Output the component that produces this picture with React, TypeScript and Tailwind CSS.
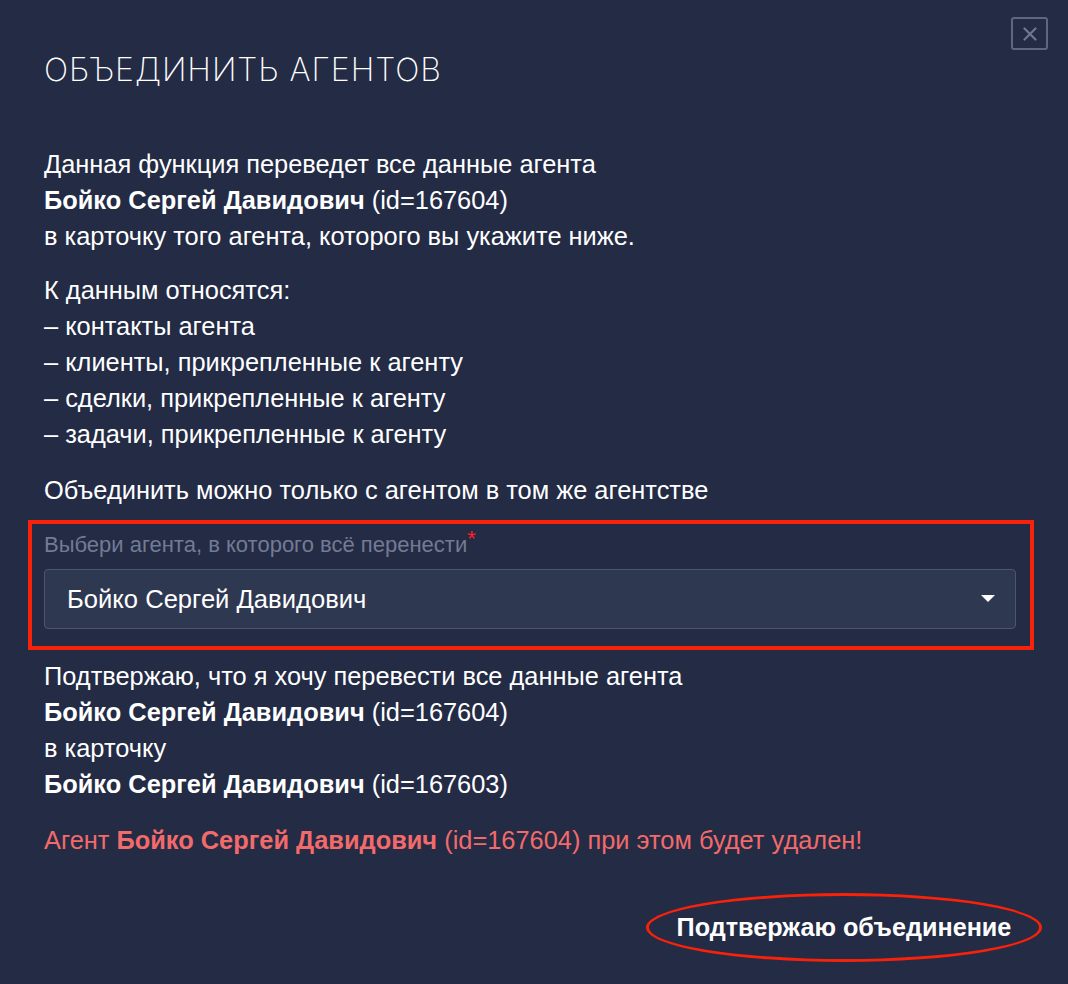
const App = () => {
  const name = "Бойко Сергей Давидович";

  return (
    <div className="relative w-[1068px] h-[984px] bg-[#232b45] px-[44px] font-['Liberation_Sans',Arial,sans-serif] text-white overflow-hidden">
      <button className="absolute top-[17px] right-[20px] w-[37px] h-[33px] border-2 border-[#5d6683] rounded-[3px] flex items-center justify-center">
        <svg width="14" height="14" viewBox="0 0 14 14" fill="none">
          <path d="M1.5 1.5 L12.5 12.5 M12.5 1.5 L1.5 12.5" stroke="#6f7892" strokeWidth="2.2" strokeLinecap="round" />
        </svg>
      </button>

      <h1 className="pt-[50px] text-[32px] leading-[40px] font-extralight tracking-[0.03em] font-['Inter','Open_Sans',sans-serif]">
        ОБЪЕДИНИТЬ АГЕНТОВ
      </h1>

      <div className="text-[25.4px] leading-[36px]">
        <p className="mt-[56px]">
          Данная функция переведет все данные агента
          <br />
          <b>{name}</b> (id=167604)
          <br />
          в карточку того агента, которого вы укажите ниже.
        </p>
        <p className="mt-[18px]">
          К данным относятся:
          <br />– контакты агента
          <br />– клиенты, прикрепленные к агенту
          <br />– сделки, прикрепленные к агенту
          <br />– задачи, прикрепленные к агенту
        </p>
        <p className="mt-[20px]">Объединить можно только с агентом в том же агентстве</p>
      </div>

      <div className="mt-[12px] -mx-[16px] w-[1006px] border-[4px] border-[#f8220a] pt-[10px] pb-[17px] pl-[12px] pr-[14px]">
        <label className="block text-[22px] leading-[22px] text-[#737b94]">
          Выбери агента, в которого всё перенести
          <span className="relative -top-[6px] text-[#f5222d]">*</span>
        </label>
        <div className="mt-[13px] h-[60px] flex items-center justify-between rounded-[4px] border border-[#4c5672] bg-[#2f3851] pl-[22px] pr-[20px]">
          <span className="text-[25.6px]">{name}</span>
          <svg width="14" height="8" viewBox="0 0 14 8">
            <path d="M0 0 L14 0 L7 7 Z" fill="#ffffff" />
          </svg>
        </div>
      </div>

      <div className="text-[25.4px] leading-[36px]">
        <p className="mt-[8px]">
          Подтвержаю, что я хочу перевести все данные агента
          <br />
          <b>{name}</b> (id=167604)
          <br />
          в карточку
          <br />
          <b>{name}</b> (id=167603)
        </p>
        <p className="mt-[20px] text-[#f26a6a]">
          Агент <b>{name}</b> (id=167604) при этом будет удален!
        </p>
      </div>

      <div className="mt-[35px] -mr-[18px] flex justify-end">
        <button className="w-[396px] h-[69px] rounded-[50%] border-[3.5px] border-[#f8220a] text-[25.2px] font-bold text-white">
          Подтвержаю объединение
        </button>
      </div>
    </div>
  );
};

export default App;
